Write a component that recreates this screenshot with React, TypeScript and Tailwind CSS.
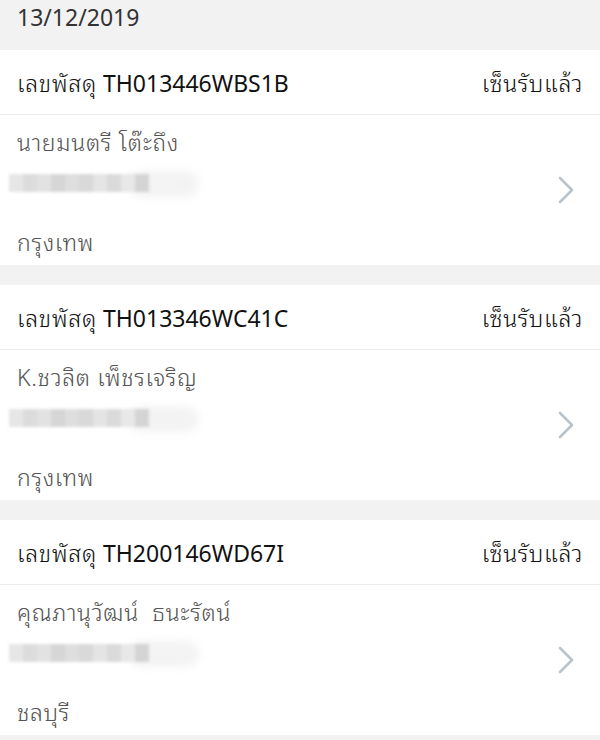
type Parcel = {
  code: string;
  status: string;
  name: string;
  city: string;
};

const parcels: Parcel[] = [
  { code: "TH013446WBS1B", status: "เซ็นรับแล้ว", name: "นายมนตรี โต๊ะถึง", city: "กรุงเทพ" },
  { code: "TH013346WC41C", status: "เซ็นรับแล้ว", name: "K.ชวลิต เพ็ชรเจริญ", city: "กรุงเทพ" },
  { code: "TH200146WD67I", status: "เซ็นรับแล้ว", name: "คุณภานุวัฒน์  ธนะรัตน์", city: "ชลบุรี" },
];

// blurred address line, pixelated like the screenshot
function Blurred() {
  const cells = ["#e6e6e6", "#dcdcdc", "#e2e2e2", "#d6d6d6", "#dedede", "#d9d9d9", "#e4e4e4", "#dadada", "#e8e8e8", "#d4d4d4"];
  return (
    <div className="relative h-[22px] w-[190px]">
      <div className="absolute left-[120px] top-0 h-[26px] w-[70px] rounded-full bg-[#f3f3f3] blur-[4px]" />
      <div className="absolute left-0 top-[3px] flex h-[18px] w-[140px] blur-[1.5px]">
        {cells.map((c, i) => (
          <div key={i} className="h-full flex-1" style={{ backgroundColor: c }} />
        ))}
      </div>
    </div>
  );
}

function Chevron() {
  return (
    <svg width="18" height="28" viewBox="0 0 18 28" fill="none" className="shrink-0">
      <polyline points="3,2 15,14 3,26" stroke="#b8c3cb" strokeWidth="2.6" strokeLinecap="round" strokeLinejoin="round" />
    </svg>
  );
}

function ParcelCard({ p }: { p: Parcel }) {
  return (
    <div className="bg-white">
      <div className="flex h-[65px] items-center justify-between border-b border-[#ececec] pl-[17px] pr-[17px] pt-[2px] text-[23px] text-[#111]">
        <span>
          <span className="font-light tracking-[0.8px]">เลขพัสดุ</span> {p.code}
        </span>
        <span className="font-light tracking-[0.6px]">{p.status}</span>
      </div>
      <div className="flex h-[150px] items-center justify-between pl-[17px] pr-[25px]">
        <div className="flex h-full flex-col whitespace-pre text-[23px] font-light leading-[30px] tracking-[0.7px] text-[#555]">
          <div className="pt-[12px]">{p.name}</div>
          <div className="-ml-[8px] mt-[14px]">
            <Blurred />
          </div>
          <div className="mt-auto pb-[8px]">{p.city}</div>
        </div>
        <Chevron />
      </div>
    </div>
  );
}

export default function App() {
  return (
    <div
      className="min-h-[740px] w-[600px] bg-[#f2f2f2]"
      style={{ fontFamily: '"Noto Sans", "Noto Sans Thai Looped", sans-serif' }}
    >
      <div className="h-[50px] pl-[17px] pt-[2px] text-[23px] leading-[30px] text-[#333]">13/12/2019</div>
      <div className="flex flex-col gap-[20px]">
        {parcels.map((p) => (
          <ParcelCard key={p.code} p={p} />
        ))}
      </div>
    </div>
  );
}
